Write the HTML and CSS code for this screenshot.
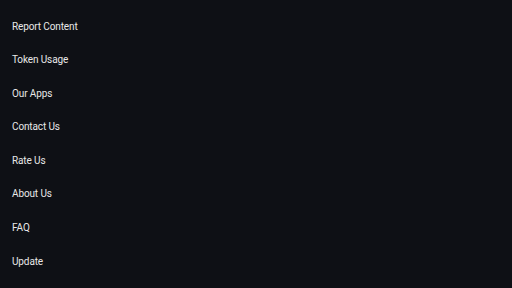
FILE: index.html
```html
<!DOCTYPE html>
<html>
<head>
<meta charset="utf-8">
<link rel="stylesheet" href="styles.css">
</head>
<body>
<ul class="menu">
  <li class="menu-item">Report Content</li>
  <li class="menu-item">Token Usage</li>
  <li class="menu-item">Our Apps</li>
  <li class="menu-item">Contact Us</li>
  <li class="menu-item">Rate Us</li>
  <li class="menu-item">About Us</li>
  <li class="menu-item">FAQ</li>
  <li class="menu-item">Update</li>
</ul>
</body>
</html>
```
FILE: styles.css
```css
html, body {
  margin: 0;
  padding: 0;
  width: 512px;
  height: 288px;
  overflow: hidden;
  background: #0e1015;
}
.menu {
  list-style: none;
  margin: 0;
  padding: 9.5px 0 0 12px;
  display: flex;
  flex-direction: column;
}
.menu-item {
  height: 33.6px;
  line-height: 33.6px;
  font-family: Roboto, "Liberation Sans", sans-serif;
  font-size: 10px;
  letter-spacing: -0.12px;
  color: #e8e8e8;
}
```
